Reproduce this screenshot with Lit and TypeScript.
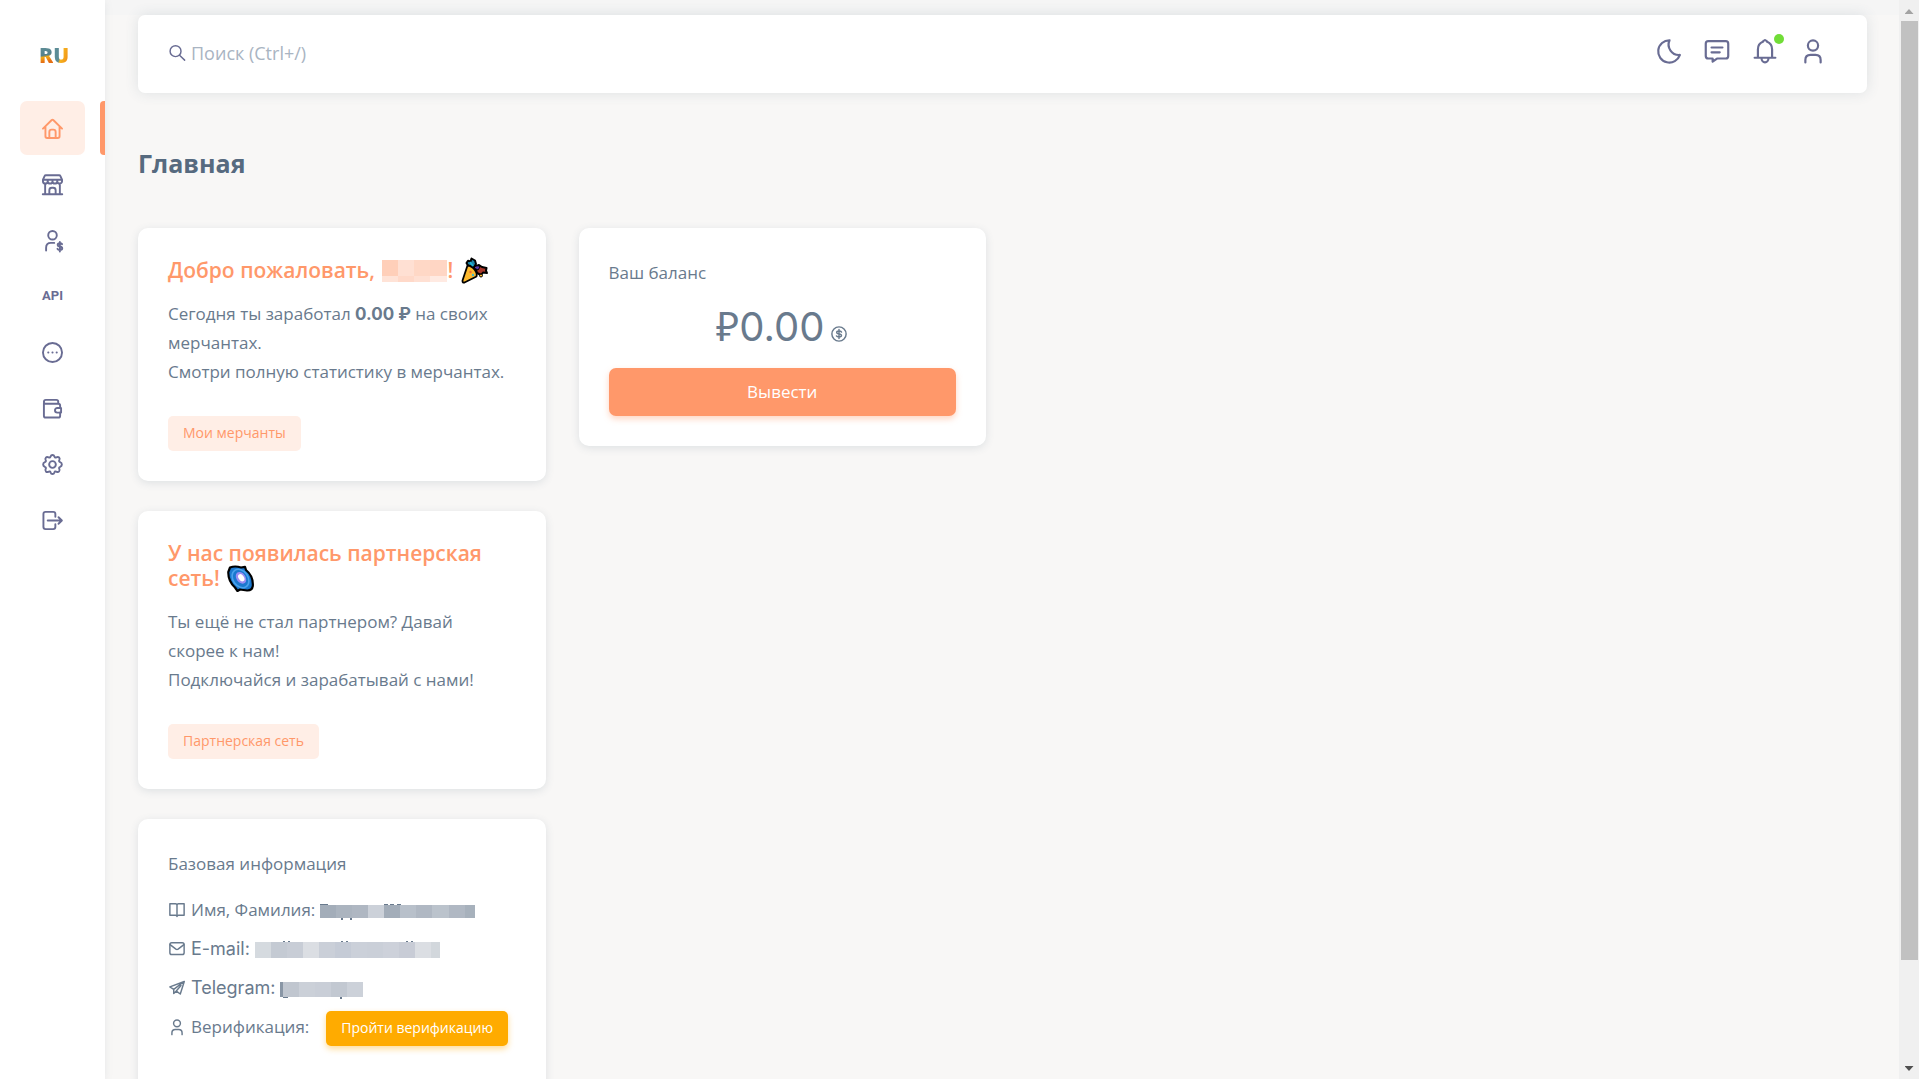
import { LitElement, html, css, svg, nothing } from "lit";
import { customElement, property } from "lit/decorators.js";

const ICONS: Record<string, unknown> = {
  home: svg`<path d="M1 11.2 10.2 2.1Q11 1.4 11.8 2.1L21 11.2M3.6 9v10.2Q3.6 21 5.4 21h11.2q1.8 0 1.8-1.8V9M7.7 21v-6.400q0-2.400 2.400-2.400h1.800q2.400 0 2.400 2.400V21"/>`,
  store: svg`<path d="M4 1.300h14q.9 0 1.300.9L21 6H1l1.700-3.800Q3.100 1.300 4 1.300ZM1 6v1.500a2.500 2.500 0 0 0 5 0V6v1.500a2.500 2.500 0 0 0 5 0V6v1.500a2.500 2.500 0 0 0 5 0V6v1.500a2.500 2.500 0 0 0 5 0V6M3.300 10v11M18.700 10v11M.8 21.200h20.400M7.700 21v-4q0-2.600 2.600-2.600h1.400q2.600 0 2.600 2.600v4"/>`,
  payout: svg`<circle cx="11" cy="5.500" r="4.500"/><path d="M4.300 21.500v-3q0-5 5-5h3.500"/><path d="M21 14.800q-.6-.9-2.300-.9-2.300 0-2.300 1.700 0 1.300 2.300 1.700 2.500.4 2.500 1.900 0 1.700-2.500 1.700-1.900 0-2.500-1.200M18.700 12.500v10"/>`,
  dots: svg`<circle cx="11" cy="11" r="10"/><path d="M6.500 11h.2M10.900 11h.2M15.300 11h.2"/>`,
  wallet: svg`<path d="M2 5.500v13q0 2 2 2h13q2 0 2-2v-3.500M19 10.300V8q0-2-2-2H3.500Q2 6 2 4.200 2 2 4 2h11q2 0 2 2v2M20 10.500h-4a2.300 2.300 0 0 0 0 4.800h4z"/>`,
  gear: svg`<circle cx="11" cy="11" r="3.500"/><path d="M11 1c1.500 0 1.700.7 2 1.700.3 1 1.100 1.300 2 .8 1-.5 1.900-.8 2.900.2s.7 1.900.2 2.900c-.5.9-.1 1.700.9 2 1 .3 1.800.7 1.800 2.400s-.8 2-1.800 2.400c-1 .3-1.400 1.100-.9 2 .5 1 .7 1.900-.2 2.900s-1.900.7-2.900.2c-.9-.5-1.700-.2-2 .8-.3 1-.5 1.700-2 1.700s-1.700-.7-2-1.700c-.3-1-1.100-1.300-2-.8-1 .5-1.900.8-2.900-.2s-.7-1.900-.2-2.900c.5-.9.100-1.700-.9-2C2 13 1.200 12.700 1.200 11S2 9 3 8.600c1-.3 1.400-1.100.9-2-.5-1-.7-1.900.2-2.900s1.900-.7 2.900-.2c.9.500 1.700.2 2-.8C9.300 1.700 9.500 1 11 1Z"/>`,
  exit: svg`<path d="M14 7V4.200Q14 2 11.800 2H3.700Q1.500 2 1.500 4.200v13.600Q1.500 20 3.700 20h8.100q2.200 0 2.200-2.200V15M6 11h14.500M17.300 7.600 20.800 11l-3.500 3.400"/>`,
  moon: svg`<path d="M11.500 1.200A10.200 10.200 0 1 0 21 14.600 9.500 9.500 0 0 1 11.500 1.200Z"/>`,
  chat: svg`<path d="M3 2h16q2.300 0 2.300 2.300v11.300q0 2.300-2.300 2.300h-8L7 20.800v-2.900H3Q.7 17.900.7 15.600V4.300Q.7 2 3 2ZM6 7.800h10M6 12.200h7.500"/>`,
  bell: svg`<path d="M11 1c1 0 1.700.6 2 1.600 3 1.200 4.500 3.600 4.500 7V16q0 1.200 1.200 1.200H20.500M11 1c-1 0-1.700.6-2 1.600C6 3.800 4.500 6.200 4.500 9.600V16q0 1.200-1.200 1.200H1.500M1.500 17.200h19M7.800 17.500a3.200 4 0 0 0 6.400 0"/>`,
  user: svg`<circle cx="11" cy="6" r="4.700"/><path d="M4 21.500v-2.300q0-4.700 4.700-4.700h4.600q4.700 0 4.700 4.700v2.300"/>`,
  search: svg`<circle cx="9" cy="8.500" r="7.500"/><path d="m14.500 14 7 6.800"/>`,
  book: svg`<path d="M11 4.500Q11 2.500 9 2.500H1.200v15.800H9q2 0 2 1.700 0-1.700 2-1.700h7.800V2.500H13q-2 0-2 2Zm0 0v15"/>`,
  mail: svg`<rect x="1.200" y="2.500" width="19.600" height="16" rx="2.500"/><path d="m1.500 5 8 6.200q1.500 1 3 0L20.500 5"/>`,
  plane: svg`<path d="M21 2 1.200 9.500l5.300 3.300v5.700l3.600-3.200 5.400 4L21 2 6.500 12.800M16.500 7.500 10 15"/>`,
  coin: svg`<circle cx="11" cy="11" r="9.800"/><path d="M14.500 8.300Q13.700 7 11 7 7.800 7 7.800 9q0 1.500 3.200 2 3.400.4 3.400 2.200Q14.400 15 11 15q-2.700 0-3.500-1.400M11 4.800v12.400"/>`,
};

const icon = (name: string, size = "md") => svg`
  <svg class="icon ${size}" viewBox="0 0 22 22" aria-hidden="true">${ICONS[name]}</svg>`;

const SHARED = css`
  .icon { fill: none; stroke: currentColor; stroke-width: 2; stroke-linecap: round; stroke-linejoin: round; flex: none; display: block; overflow: visible; }
  .icon.sm { width: 16px; height: 16px; margin: 0 1px; }
  .icon.md { width: 21px; height: 21px; }
  .icon.lg { width: 24px; height: 24px; }
  .latin { font-family: Inter, "Open Sans", sans-serif; line-height: 1; }
`;

/** A censored value: a strip of flat cells, with an optional lighter lower row. */
@customElement("masked-value")
export class MaskedValue extends LitElement {
  @property({ attribute: false }) cells: [number, string][] = [];
  @property({ attribute: false }) marks: [number, number, number, number][] = [];
  @property({ attribute: false }) lower: string[] = [];
  @property({ type: Number }) size = 12;

  static styles = css`
    :host { display: inline-flex; flex: none; }
    svg { display: block; overflow: visible; }
    .mark { fill: #697a8d; }
  `;

  render() {
    let x = 0;
    const total = this.cells.reduce((sum, c) => sum + c[0], 0);
    return html`<svg width=${total} height=${this.size} aria-hidden="true">
      ${this.cells.map(([w, color], i) => {
        const left = x;
        x += w;
        const low = this.lower[i];
        return svg`<rect x=${left} y="0" width=${w} height=${this.size} fill=${color}/>
          ${low ? svg`<rect x=${left} y=${this.size - 6} width=${w} height="6" fill=${low}/>` : nothing}`;
      })}
      ${this.marks.map(([mx, my, w, h]) => svg`<rect class="mark" x=${mx} y=${my} width=${w} height=${h}/>`)}
    </svg>`;
  }
}

@customElement("side-nav")
export class SideNav extends LitElement {
  static styles = [SHARED, css`
    :host { display: flex; flex-direction: column; flex: none; width: 105px; background: #fff; box-shadow: 0 2px 8px rgba(105, 122, 141, 0.12); z-index: 1; }
    .logo { display: block; height: 65px; padding: 36px 0 0 3px; text-align: center; text-decoration: none; font: 900 21px/38px "Open Sans", sans-serif; }
    .r, .u { background-clip: text; -webkit-background-clip: text; color: transparent; }
    .r { background-image: linear-gradient(170deg, #5f8f98 20%, #55818c 50%, #f5a914 56%, #e56f14 72%); }
    .u { background-image: linear-gradient(105deg, #5c8c96 45%, #f6b41d 52%, #f08a17 90%); }
    ul { list-style: none; margin: 0; padding: 0; display: flex; flex-direction: column; gap: 2px; }
    li { display: flex; padding: 0 0 0 20px; justify-content: space-between; }
    .item { width: 65px; height: 54px; display: flex; align-items: center; justify-content: center; border-radius: 7px; color: #696c93; text-decoration: none; }
    .active { background: #ffeee6; color: #ff986a; }
    .marker { width: 5px; background: #ff986a; border-radius: 4px 0 0 4px; }
    .api { font: 700 13px/20px Roboto, sans-serif; }
  `];

  private items = [
    ["home", "Главная"], ["store", "Мерчанты"], ["payout", "Выплаты"], ["api", "API"],
    ["dots", "Сообщения"], ["wallet", "Кошелёк"], ["gear", "Настройки"], ["exit", "Выход"],
  ];

  render() {
    return html`
      <a class="logo" href="#"><span class="r">R</span><span class="u">U</span></a>
      <nav><ul>
        ${this.items.map(([name, label], i) => html`<li>
          <a class="item ${i === 0 ? "active" : ""}" href="#${name}" aria-label=${label}>
            ${name === "api" ? html`<span class="api">API</span>` : icon(name)}
          </a>
          ${i === 0 ? html`<span class="marker"></span>` : nothing}
        </li>`)}
      </ul></nav>`;
  }
}

@customElement("top-bar")
export class TopBar extends LitElement {
  static styles = [SHARED, css`
    :host { display: flex; align-items: flex-start; justify-content: space-between; box-sizing: border-box; height: 78px; padding: 24px 42px 0 30px; background: #fff; border-radius: 7px; box-shadow: 0 0 14px rgba(67, 89, 113, 0.14); }
    .search { display: flex; align-items: center; gap: 5px; flex: 1; height: 28px; color: #696c93; }
    input { flex: 1; border: 0; outline: 0; padding: 0; background: none; color: #697a8d; font: 400 18px/28px "Open Sans", sans-serif; }
    input::placeholder { color: #a9b4c2; opacity: 1; }
    .actions { display: flex; gap: 24px; }
    button { position: relative; border: 0; padding: 0; background: none; color: #696c93; display: block; }
    .dot { position: absolute; right: -7px; top: -5px; width: 10px; height: 10px; border-radius: 50%; background: #71dd37; }
  `];

  render() {
    return html`
      <label class="search">${icon("search", "sm")}
        <input type="search" placeholder="Поиск (Ctrl+/)" aria-label="Поиск" />
      </label>
      <div class="actions">
        <button aria-label="Тема">${icon("moon", "lg")}</button>
        <button aria-label="Чат">${icon("chat", "lg")}</button>
        <button aria-label="Уведомления">${icon("bell", "lg")}<span class="dot"></span></button>
        <button aria-label="Профиль">${icon("user", "lg")}</button>
      </div>`;
  }
}

@customElement("app-root")
export class AppRoot extends LitElement {
  static styles = [SHARED, css`
    :host { display: flex; height: 100vh; overflow: hidden; background: #f8f7f6; color: #697a8d; font: 400 17px/29px "Open Sans", "Noto Sans", sans-serif; }
    main { flex: 1; min-width: 0; padding: 15px 32px 0 33px; background: linear-gradient(#f5f5f5 15px, transparent 15px); }
    h1 { margin: 52px 0 46px; font-size: 25px; line-height: 37px; font-weight: 700; color: #566a7f; }
    .grid { display: grid; grid-template-columns: repeat(4, 1fr); gap: 33px; align-items: start; }
    .stack { display: flex; flex-direction: column; gap: 30px; }
    .card { background: #fff; border-radius: 10px; padding: 30px; box-shadow: 0 2px 8px rgba(67, 89, 113, 0.14); }
    h2 { margin: 0 0 16px; font-size: 21px; line-height: 25px; font-weight: 600; color: #ff986a; }
    .inline { vertical-align: middle; margin: -2px 0 0 2px; }
    .emoji { width: 27px; height: 27px; margin: -5px 0 -1px 2px; vertical-align: middle; }
    p { margin: 0; }
    .lead { margin-bottom: 30px; }
    .soft { display: inline-flex; align-items: center; height: 35px; box-sizing: border-box; padding: 0 15px 2px; border: 0; border-radius: 5px; background: #ffeee6; color: #ff986a; font: 400 14px/20px "Open Sans", sans-serif; text-decoration: none; vertical-align: top; }
    .total { display: flex; justify-content: center; align-items: baseline; gap: 6px; height: 48px; margin: 15px 0 18px; font-size: 40px; line-height: 48px; }
    .total .icon { align-self: flex-end; margin-bottom: 8px; }
    .primary { display: block; width: 100%; height: 48px; border: 0; border-radius: 7px; background: #ff986a; color: #fff; font: 400 17px/28px "Open Sans", sans-serif; box-shadow: 0 3px 6px rgba(255, 152, 106, 0.4); }
    .facts { list-style: none; margin: 12px 0 0; padding: 0 0 60px; display: flex; flex-direction: column; }
    .facts li { display: flex; align-items: center; gap: 5px; height: 39px; }
    .facts .latin { font-size: 18px; }
    .facts masked-value, .warn { margin-top: 3px; }
    .warn { display: flex; align-items: center; height: 35px; margin-left: 12px; padding: 0 15px; border: 0; border-radius: 5px; background: #ffab00; color: #fff; font: 500 14px/20px "Open Sans", sans-serif; white-space: nowrap; box-shadow: 0 3px 6px rgba(255, 171, 0, 0.4); }
    .scroll { flex: none; width: 20px; display: flex; flex-direction: column; align-items: center; background: #f0f0f0; }
    .arrow { width: 9px; height: 5px; margin: 9px 0 7px; background: #a3a3a3; clip-path: polygon(50% 0, 100% 100%, 0 100%); }
    .arrow.down { margin: auto 0 8px; background: #505050; clip-path: polygon(0 0, 100% 0, 50% 100%); }
    .thumb { width: 17px; height: 87%; background: #c1c1c1; }
  `];

  private party = svg`<svg class="emoji" viewBox="0 0 27 27" aria-hidden="true">
    <path d="M5.500 6 7 3.800 9.500 4.500 10.500 1.500 14 3.500 15 7 12.500 11 8 10Z" fill="#1e86a8" stroke="#000" stroke-width="2" stroke-linejoin="round"/>
    <path d="m14 9.500 4-1.500 3 2 4.500 1-.5 2.500 1 2.500-4-.5-2 2.500-4-2Z" fill="#a8372b" stroke="#000" stroke-width="2" stroke-linejoin="round"/>
    <path d="M13 11q3-4 6-1l-2 3Z" fill="#5a3aa8" stroke="#000"/>
    <path d="M6.500 8.500Q10.500 8.500 13.500 12.500T15.500 19.500L3.500 25.500Q1.300 26 1.500 23.500Z" fill="#fdb92e" stroke="#000" stroke-width="1.800" stroke-linejoin="round"/>
    <circle cx="9.500" cy="15" r="1.200" fill="#ef6b3c"/><circle cx="12" cy="18" r="1.200" fill="#44b9c9"/>
    <path d="m9 5 3 4" stroke="#1fb5d8" stroke-width="1.500"/><circle cx="20" cy="18.500" r="1.500" fill="#fdb92e" stroke="#000"/>
  </svg>`;

  private galaxy = svg`<svg class="emoji" viewBox="0 0 27 27" aria-hidden="true">
    <path d="M3 2.500Q8 .5 14 2.500L18 1.800 19 5Q26.500 11 25.800 21 25 25.800 20 25.500L13 24.500 10.500 26 8 22.500Q1 16 1.300 7Z" fill="#1b78cf" stroke="#000" stroke-width="2.200" stroke-linejoin="round"/>
    <ellipse cx="13.500" cy="13.500" rx="7.500" ry="10" transform="rotate(-35 13.500 13.500)" fill="none" stroke="#4aa3ec" stroke-width="1.600"/>
    <ellipse cx="14" cy="12.800" rx="4.600" ry="6.400" transform="rotate(-35 14 12.800)" fill="#9a8df2"/>
    <ellipse cx="14.300" cy="12.800" rx="2.600" ry="4" transform="rotate(-35 14.300 12.800)" fill="#fff"/>
  </svg>`;

  render() {
    return html`
      <side-nav></side-nav>
      <main>
        <top-bar></top-bar>
        <h1>Главная</h1>
        <div class="grid">
          <div class="stack">
            <section class="card">
              <h2>Добро пожаловать, <masked-value class="inline" .size=${22}
                  .cells=${[[16, "#ffcfb9"], [16, "#ffe0d3"], [16, "#ffd8c6"], [17, "#ffd6c4"]]}
                  .lower=${["#ffe3d7", "#ffd9c9", "#ffe0d3", "#ffeae2"]}></masked-value>! ${this.party}</h2>
              <p class="lead">Сегодня ты заработал <b class="latin">0.00 ₽</b> на своих<br />мерчантах.<br />Смотри полную статистику в мерчантах.</p>
              <a class="soft" href="#store">Мои мерчанты</a>
            </section>
            <section class="card">
              <h2>У нас появилась партнерская сеть! ${this.galaxy}</h2>
              <p class="lead">Ты ещё не стал партнером? Давай<br />скорее к нам!<br />Подключайся и зарабатывай с нами!</p>
              <a class="soft" href="#partners">Партнерская сеть</a>
            </section>
            <section class="card">
              <p>Базовая информация</p>
              <ul class="facts">
                <li>${icon("book", "sm")}<span>Имя, Фамилия:</span>
                  <masked-value .size=${13}
                    .cells=${[[16, "#a3adb9"], [16, "#abb4bf"], [16, "#afb7c2"], [16, "#ccd1d9"], [16, "#a3adb9"], [16, "#b8c0ca"], [16, "#b0b8c3"], [17, "#bbc3cc"], [16, "#b0b8c3"], [10, "#a7b1bc"]]}
                    .marks=${[[0, -1, 8, 1], [21, 13, 2, 2], [30, 13, 2, 2], [64, -1, 4, 1], [70, -1, 4, 1], [77, -1, 4, 1]]}></masked-value></li>
                <li>${icon("mail", "sm")}<span class="latin">E-mail:</span>
                  <masked-value .size=${16}
                    .cells=${[[16, "#d5dadf"], [16, "#c4cad3"], [16, "#c8cdd6"], [16, "#dbdee3"], [16, "#cacfd8"], [16, "#c5cbd6"], [16, "#cbd0d9"], [16, "#cacfd8"], [16, "#cdd1da"], [16, "#c8ccd6"], [16, "#dbdee3"], [9, "#d2d7dc"]]}
                    .marks=${[[28, -1, 2, 1], [33, -1, 2, 1], [86, -1, 2, 1], [91, -1, 2, 1], [151, -1, 2, 1], [156, -1, 2, 1]]}></masked-value></li>
                <li>${icon("plane", "sm")}<span class="latin">Telegram:</span>
                  <masked-value .size=${15}
                    .cells=${[[3, "#8996a5"], [16, "#c0c6cf"], [16, "#cbd0d8"], [16, "#c9ced7"], [16, "#c2c8d1"], [16, "#ccd1d9"]]}
                    .marks=${[[3, 15, 5, 1], [60, 15, 2, 2]]}></masked-value></li>
                <li>${icon("user", "sm")}<span>Верификация:</span>
                  <button class="warn">Пройти верификацию</button></li>
              </ul>
            </section>
          </div>
          <section class="card">
            <p>Ваш баланс</p>
            <div class="total"><span>₽<span class="latin">0.00</span></span>${icon("coin", "sm")}</div>
            <button class="primary">Вывести</button>
          </section>
        </div>
      </main>
      <div class="scroll" aria-hidden="true"><span class="arrow"></span><span class="thumb"></span><span class="arrow down"></span></div>`;
  }
}
